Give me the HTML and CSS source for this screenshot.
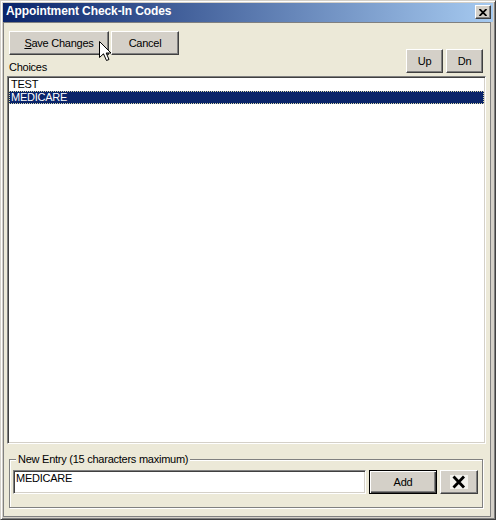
FILE: index.html
```html
<!DOCTYPE html>
<html>
<head>
<meta charset="utf-8">
<link rel="stylesheet" href="styles.css">
</head>
<body>
<div class="window">
  <div class="titlebar">
    <span class="title">Appointment Check-In Codes</span>
    <div class="close">
      <svg width="8" height="7" viewBox="0 0 8 7"><path d="M0.5 0 L7.5 7 M7.5 0 L0.5 7" stroke="#000" stroke-width="1.8" fill="none"/></svg>
    </div>
  </div>
  <div class="client">
    <div class="top">
      <div class="top-left">
        <div class="btn-row">
          <div class="btn btn-save"><span><u>S</u>ave Changes</span></div>
          <div class="btn btn-cancel">Cancel</div>
        </div>
        <div class="label">Choices</div>
      </div>
      <div class="updn">
        <div class="btn btn-sm">Up</div>
        <div class="btn btn-sm">Dn</div>
      </div>
    </div>
    <div class="list">
      <div class="item">TEST</div>
      <div class="item selected">MEDICARE</div>
    </div>
    <div class="group">
      <span class="legend">New Entry (15 characters maximum)</span>
      <div class="entry-row">
        <div class="edit">MEDICARE</div>
        <div class="btn btn-add">Add</div>
        <div class="btn btn-x">
          <svg width="18" height="14" viewBox="0 0 18 14"><rect width="18" height="14" fill="#f3f2ee"/><path d="M3.5 1.5 L14 12.5 M14 1.5 L3.5 12.5" stroke="#000" stroke-width="2.8" fill="none"/></svg>
        </div>
      </div>
    </div>
  </div>
  <svg class="cursor" width="13" height="21" viewBox="0 0 13 21"><path d="M0.5 0.5 L0.5 16.5 L4.5 12.8 L7.5 19.5 L10 18.5 L7.2 12 L12 12 Z" fill="#fff" stroke="#000" stroke-width="1" stroke-linejoin="miter"/></svg>
</div>
</body>
</html>
```
FILE: styles.css
```css
* { box-sizing: border-box; }
body {
  margin: 0;
  font-family: "Liberation Sans", Arial, sans-serif;
  font-size: 11px;
  letter-spacing: -0.25px;
  color: #000;
}
.window {
  position: relative;
  width: 496px;
  height: 520px;
  border: 1px solid;
  border-color: #d4d0c8 #404040 #404040 #d4d0c8;
  box-shadow: inset 1px 1px #fff, inset -1px -1px #808080;
  padding: 2px;
  background: #d4d0c8;
  display: flex;
  flex-direction: column;
}
.titlebar {
  flex: none;
  height: 19px;
  display: flex;
  justify-content: space-between;
  align-items: flex-start;
  background: linear-gradient(to right, #0a246a, #a6caf0);
}
.title {
  color: #fff;
  font-weight: bold;
  font-size: 12px;
  letter-spacing: -0.1px;
  line-height: 17px;
  padding-left: 3px;
}
.close {
  margin: 2px 2px 0 0;
  width: 16px;
  height: 14px;
  background: #d4d0c8;
  border: 1px solid;
  border-color: #fff #404040 #404040 #fff;
  box-shadow: inset -1px -1px #808080;
  display: flex;
  align-items: center;
  justify-content: center;
}
.close svg { display: block; }
.client {
  flex: 1;
  margin-right: 2px;
  border: 1px solid #808080;
  background: #ece9d8;
  display: flex;
  flex-direction: column;
}
.top {
  flex: none;
  height: 53px;
  display: flex;
  justify-content: space-between;
  padding: 8px 7px 0 5px;
}
.top-left { display: flex; flex-direction: column; }
.btn-row { display: flex; gap: 2px; }
.label { margin-top: 6px; line-height: 13px; }
.updn {
  display: flex;
  gap: 3px;
  align-self: flex-end;
  margin-bottom: 3px;
}
.btn {
  height: 24px;
  background: #d4d0c8;
  border: 1px solid;
  border-color: #fff #404040 #404040 #fff;
  box-shadow: inset -1px -1px #808080;
  display: flex;
  align-items: center;
  justify-content: center;
  color: #000;
}
.btn-save { width: 100px; }
.btn-cancel { width: 68px; }
.btn-sm { width: 37px; }
.btn-add {
  width: 68px;
  border: 1px solid #000;
  box-shadow: inset 1px 1px #fff, inset -1px -1px #404040, inset -2px -2px #808080;
}
.btn-x { width: 38px; }
.btn-x svg { display: block; }
.list {
  flex: none;
  height: 368px;
  margin: 0 4px 0 3px;
  background: #fff;
  border: 1px solid;
  border-color: #808080 #fff #fff #808080;
  box-shadow: inset 1px 1px #404040, inset -1px -1px #d4d0c8;
  padding: 1px;
}
.item {
  height: 13px;
  line-height: 13px;
  padding-left: 2px;
}
.item.selected {
  background: #0a246a;
  color: #fff;
  outline: 1px dotted #d8d8a8;
  outline-offset: -1px;
}
.group {
  position: relative;
  flex: none;
  height: 49px;
  margin: 15px 7px 0 5px;
  border: 1px solid #808080;
  box-shadow: inset 1px 1px #fff, 1px 1px #fff;
  padding: 10px 4px 0 3px;
}
.legend {
  position: absolute;
  left: 6px;
  top: -7px;
  padding: 0 2px;
  background: #ece9d8;
  line-height: 13px;
}
.entry-row {
  display: flex;
  gap: 3px;
  height: 24px;
}
.edit {
  flex: 1;
  background: #fff;
  border: 1px solid;
  border-color: #808080 #fff #fff #808080;
  box-shadow: inset 1px 1px #404040, inset -1px -1px #d4d0c8;
  padding: 1px 2px;
  line-height: 13px;
}
.cursor {
  position: absolute;
  left: 98px;
  top: 40px;
}
```
